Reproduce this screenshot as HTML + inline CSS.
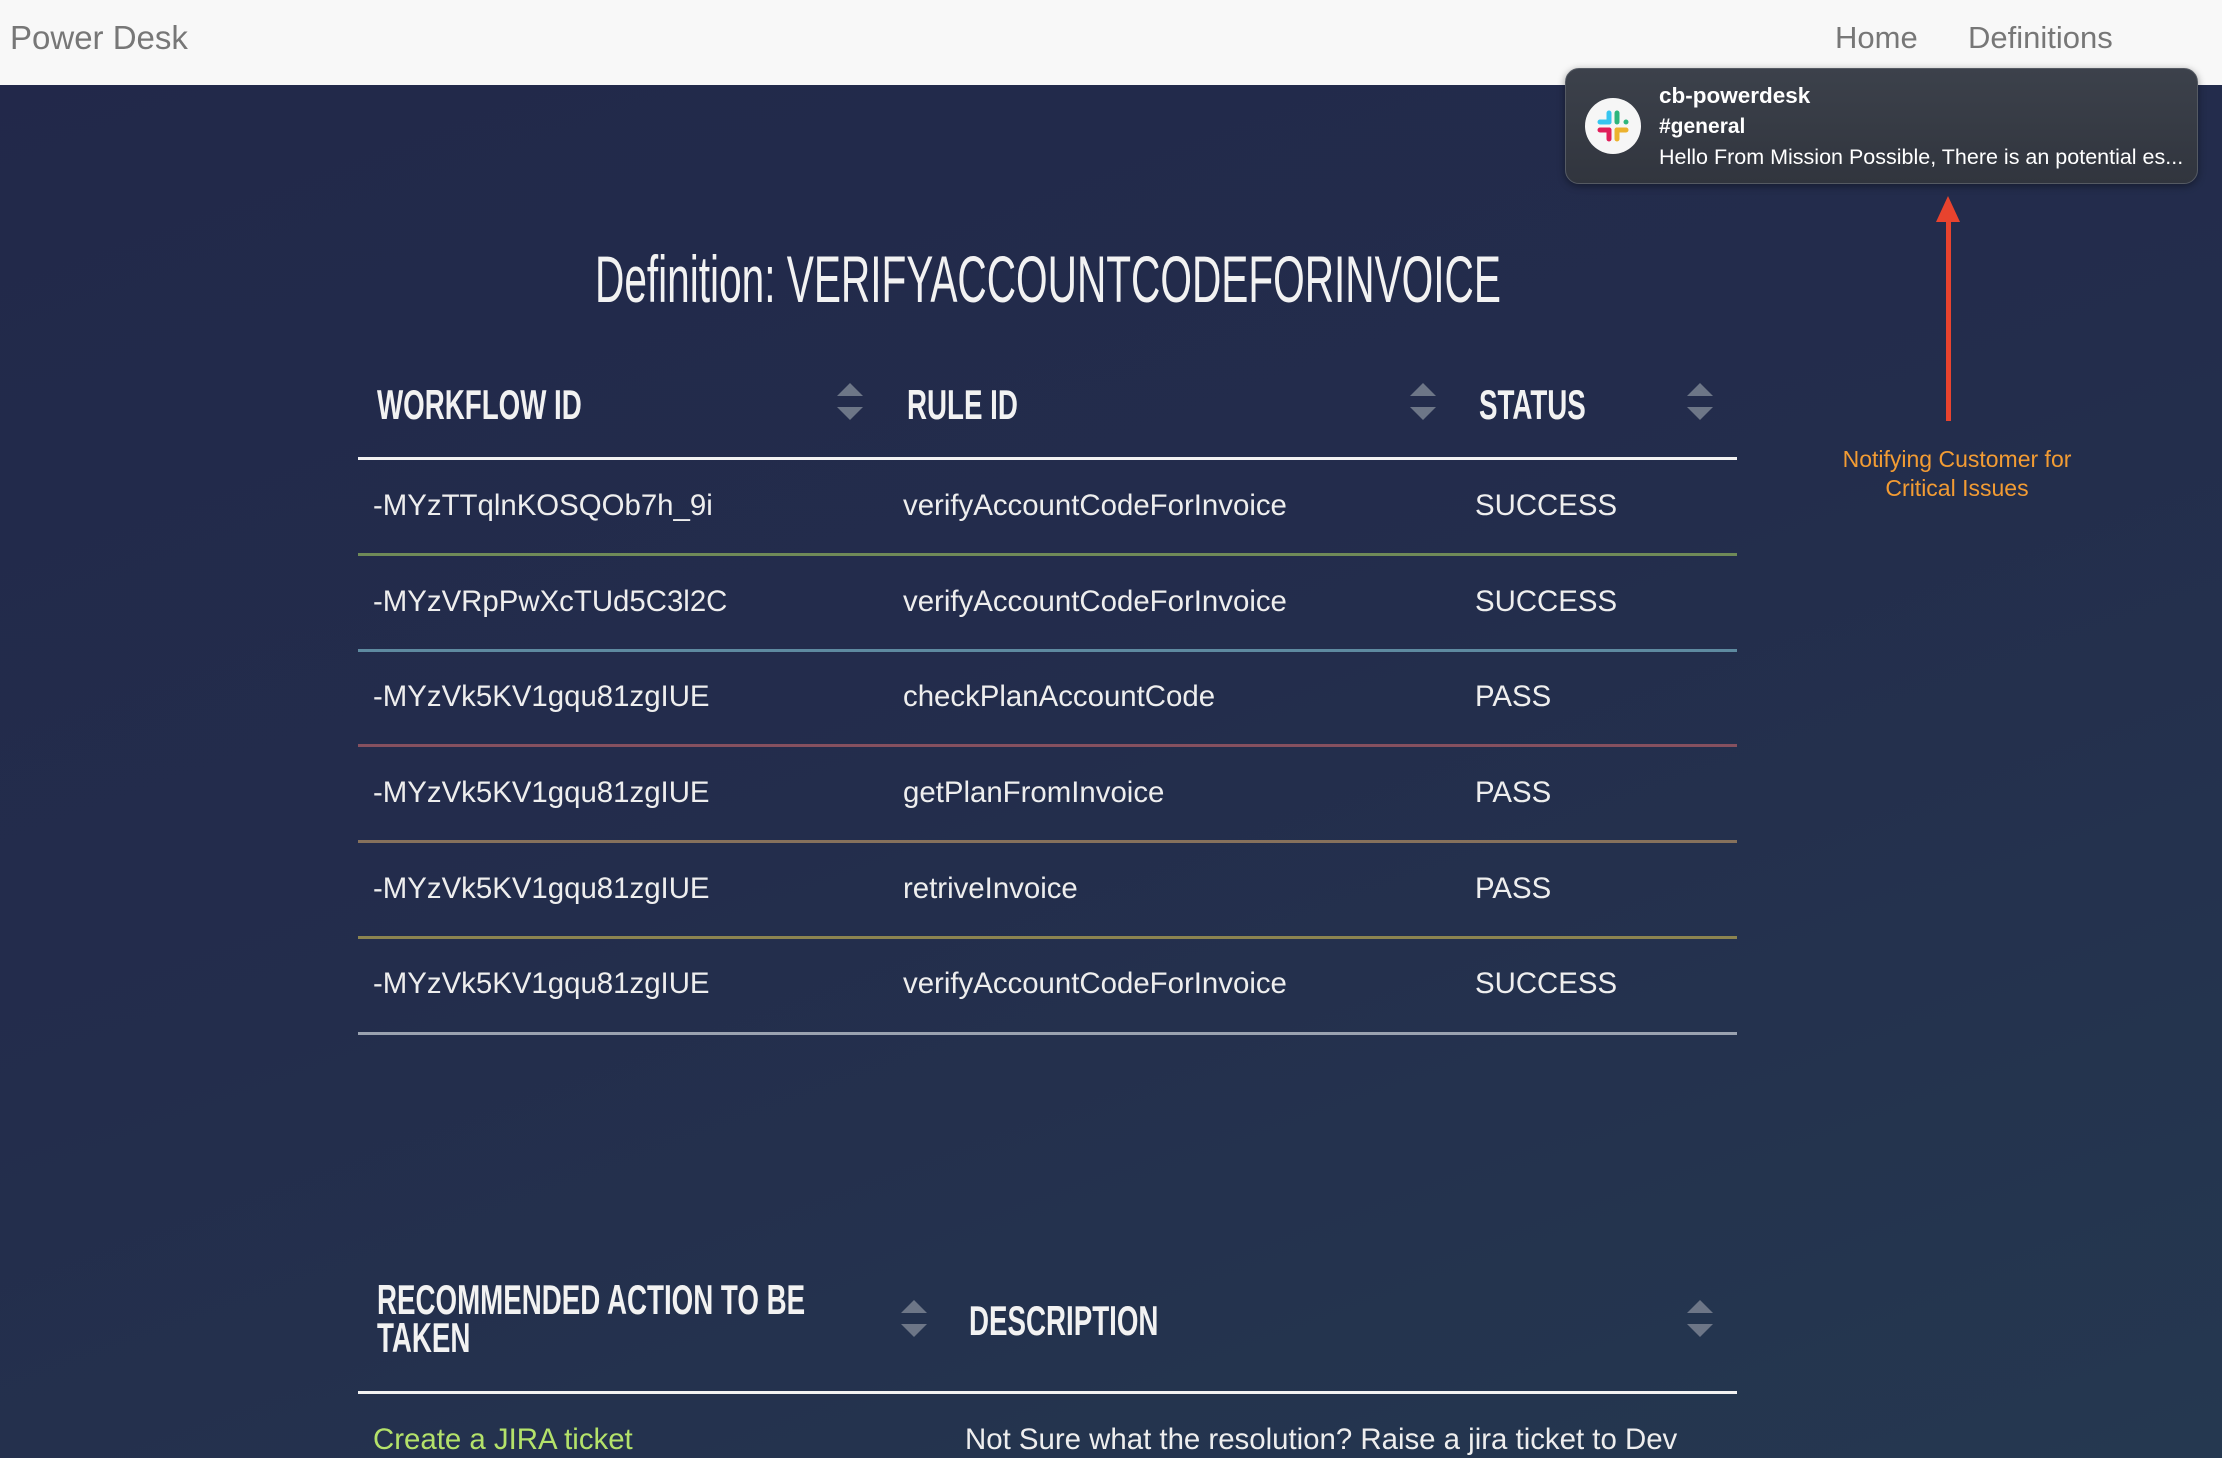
<!DOCTYPE html>
<html><head><meta charset="utf-8"><style>
*{margin:0;padding:0;box-sizing:border-box}
body{width:2222px;height:1458px;overflow:hidden;position:relative;font-family:"Liberation Sans",sans-serif;background:linear-gradient(160deg,#22284a 0%,#232d4c 50%,#253850 100%)}
.nav{position:absolute;left:0;top:0;width:2222px;height:85px;background:#f8f8f8}
.a{position:absolute;white-space:nowrap}
.nav .a{color:#777;font-size:31px;top:20px}
.cond{display:inline-block;transform-origin:left center;color:#f2f2f2;font-weight:bold}
.h{font-size:42px;transform:scaleX(0.66);line-height:42px}
.cell{font-size:29.4px;color:#eee;line-height:30px}
.line{position:absolute;left:358px;width:1379px;height:3px}
.sort{position:absolute;width:26px}
.sort:before,.sort:after{content:"";position:absolute;left:0;border-left:13px solid transparent;border-right:13px solid transparent}
.sort:before{top:0;border-bottom:13px solid #6d7687}
.sort:after{top:24px;border-top:13px solid #6d7687}
</style></head><body>
<div class="nav">
<div class="a" style="left:10px;top:19px;color:#777;font-size:33px">Power Desk</div>
<div class="a" style="left:1835px">Home</div>
<div class="a" style="left:1968px">Definitions</div>
</div>

<div class="a" style="left:1565px;top:68px;width:633px;height:116px;border-radius:14px;background:linear-gradient(180deg,#3c414b,#31353e);border:1px solid #555a63;box-shadow:0 2px 8px rgba(0,0,0,.4)"></div>
<div class="a" style="left:1585px;top:98px;width:56px;height:56px;border-radius:50%;background:#f6f6f6"></div>
<svg class="a" style="left:1595px;top:108px" width="36" height="36" viewBox="0 0 36 36">
<g stroke-linecap="round" stroke-width="5">
<line x1="14" y1="5" x2="14" y2="14" stroke="#36c5f0"/><line x1="5" y1="14" x2="14" y2="14" stroke="#36c5f0"/>
<line x1="22" y1="5" x2="22" y2="14" stroke="#2eb67d"/><line x1="31" y1="14" x2="31" y2="14" stroke="#2eb67d"/>
<line x1="22" y1="22" x2="31" y2="22" stroke="#ecb22e"/><line x1="22" y1="22" x2="22" y2="31" stroke="#ecb22e"/>
<line x1="5" y1="22" x2="14" y2="22" stroke="#e01e5a"/><line x1="14" y1="22" x2="14" y2="31" stroke="#e01e5a"/>
</g></svg>
<div class="a" style="left:1659px;top:83px;color:#fff;font-size:22.5px;font-weight:bold">cb-powerdesk</div>
<div class="a" style="left:1659px;top:115px;color:#fff;font-size:21px;font-weight:bold">#general</div>
<div class="a" style="left:1659px;top:145px;color:#fff;font-size:21.5px">Hello From Mission Possible, There is an potential es...</div>

<div class="a" style="left:1946px;top:212px;width:5px;height:209px;background:#e8432e"></div>
<div class="a" style="left:1936px;top:196px;border-left:12px solid transparent;border-right:12px solid transparent;border-bottom:26px solid #e8432e"></div>
<div class="a" style="left:1757px;width:400px;top:445px;text-align:center;color:#f39c33;font-size:23px;line-height:29px">Notifying Customer for<br>Critical Issues</div>

<div class="a" style="left:595px;top:244px"><span class="cond" style="font-size:66px;font-weight:normal;transform:scaleX(0.615);line-height:70px">Definition: VERIFYACCOUNTCODEFORINVOICE</span></div>

<div class="a" style="left:377px;top:384px"><span class="cond h">WORKFLOW ID</span></div>
<div class="a" style="left:907px;top:384px"><span class="cond h">RULE ID</span></div>
<div class="a" style="left:1479px;top:384px"><span class="cond h">STATUS</span></div>
<div class="sort" style="left:837px;top:383px"></div>
<div class="sort" style="left:1410px;top:383px"></div>
<div class="sort" style="left:1687px;top:383px"></div>
<div class="line" style="top:457px;background:#f2f2f2"></div>

<div class="a cell" style="left:373px;top:491px">-MYzTTqlnKOSQOb7h_9i</div><div class="a cell" style="left:903px;top:491px">verifyAccountCodeForInvoice</div><div class="a cell" style="left:1475px;top:491px">SUCCESS</div>
<div class="line" style="top:553px;background:#6f8a58"></div>
<div class="a cell" style="left:373px;top:587px">-MYzVRpPwXcTUd5C3l2C</div><div class="a cell" style="left:903px;top:587px">verifyAccountCodeForInvoice</div><div class="a cell" style="left:1475px;top:587px">SUCCESS</div>
<div class="line" style="top:649px;background:#5e8aa0"></div>
<div class="a cell" style="left:373px;top:682px">-MYzVk5KV1gqu81zgIUE</div><div class="a cell" style="left:903px;top:682px">checkPlanAccountCode</div><div class="a cell" style="left:1475px;top:682px">PASS</div>
<div class="line" style="top:744px;background:#85505f"></div>
<div class="a cell" style="left:373px;top:778px">-MYzVk5KV1gqu81zgIUE</div><div class="a cell" style="left:903px;top:778px">getPlanFromInvoice</div><div class="a cell" style="left:1475px;top:778px">PASS</div>
<div class="line" style="top:840px;background:#86715c"></div>
<div class="a cell" style="left:373px;top:874px">-MYzVk5KV1gqu81zgIUE</div><div class="a cell" style="left:903px;top:874px">retriveInvoice</div><div class="a cell" style="left:1475px;top:874px">PASS</div>
<div class="line" style="top:936px;background:#8c8450"></div>
<div class="a cell" style="left:373px;top:969px">-MYzVk5KV1gqu81zgIUE</div><div class="a cell" style="left:903px;top:969px">verifyAccountCodeForInvoice</div><div class="a cell" style="left:1475px;top:969px">SUCCESS</div>
<div class="line" style="top:1032px;background:#9aa2b0"></div>

<div class="a" style="left:377px;top:1281px"><span class="cond h" style="line-height:38px">RECOMMENDED ACTION TO BE<br>TAKEN</span></div>
<div class="a" style="left:969px;top:1300px"><span class="cond h">DESCRIPTION</span></div>
<div class="sort" style="left:901px;top:1300px"></div>
<div class="sort" style="left:1687px;top:1300px"></div>
<div class="line" style="top:1391px;background:#f2f2f2"></div>
<div class="a cell" style="left:373px;top:1425px;color:#b4e26a">Create a JIRA ticket</div>
<div class="a cell" style="left:965px;top:1425px">Not Sure what the resolution? Raise a jira ticket to Dev</div>
</body></html>
